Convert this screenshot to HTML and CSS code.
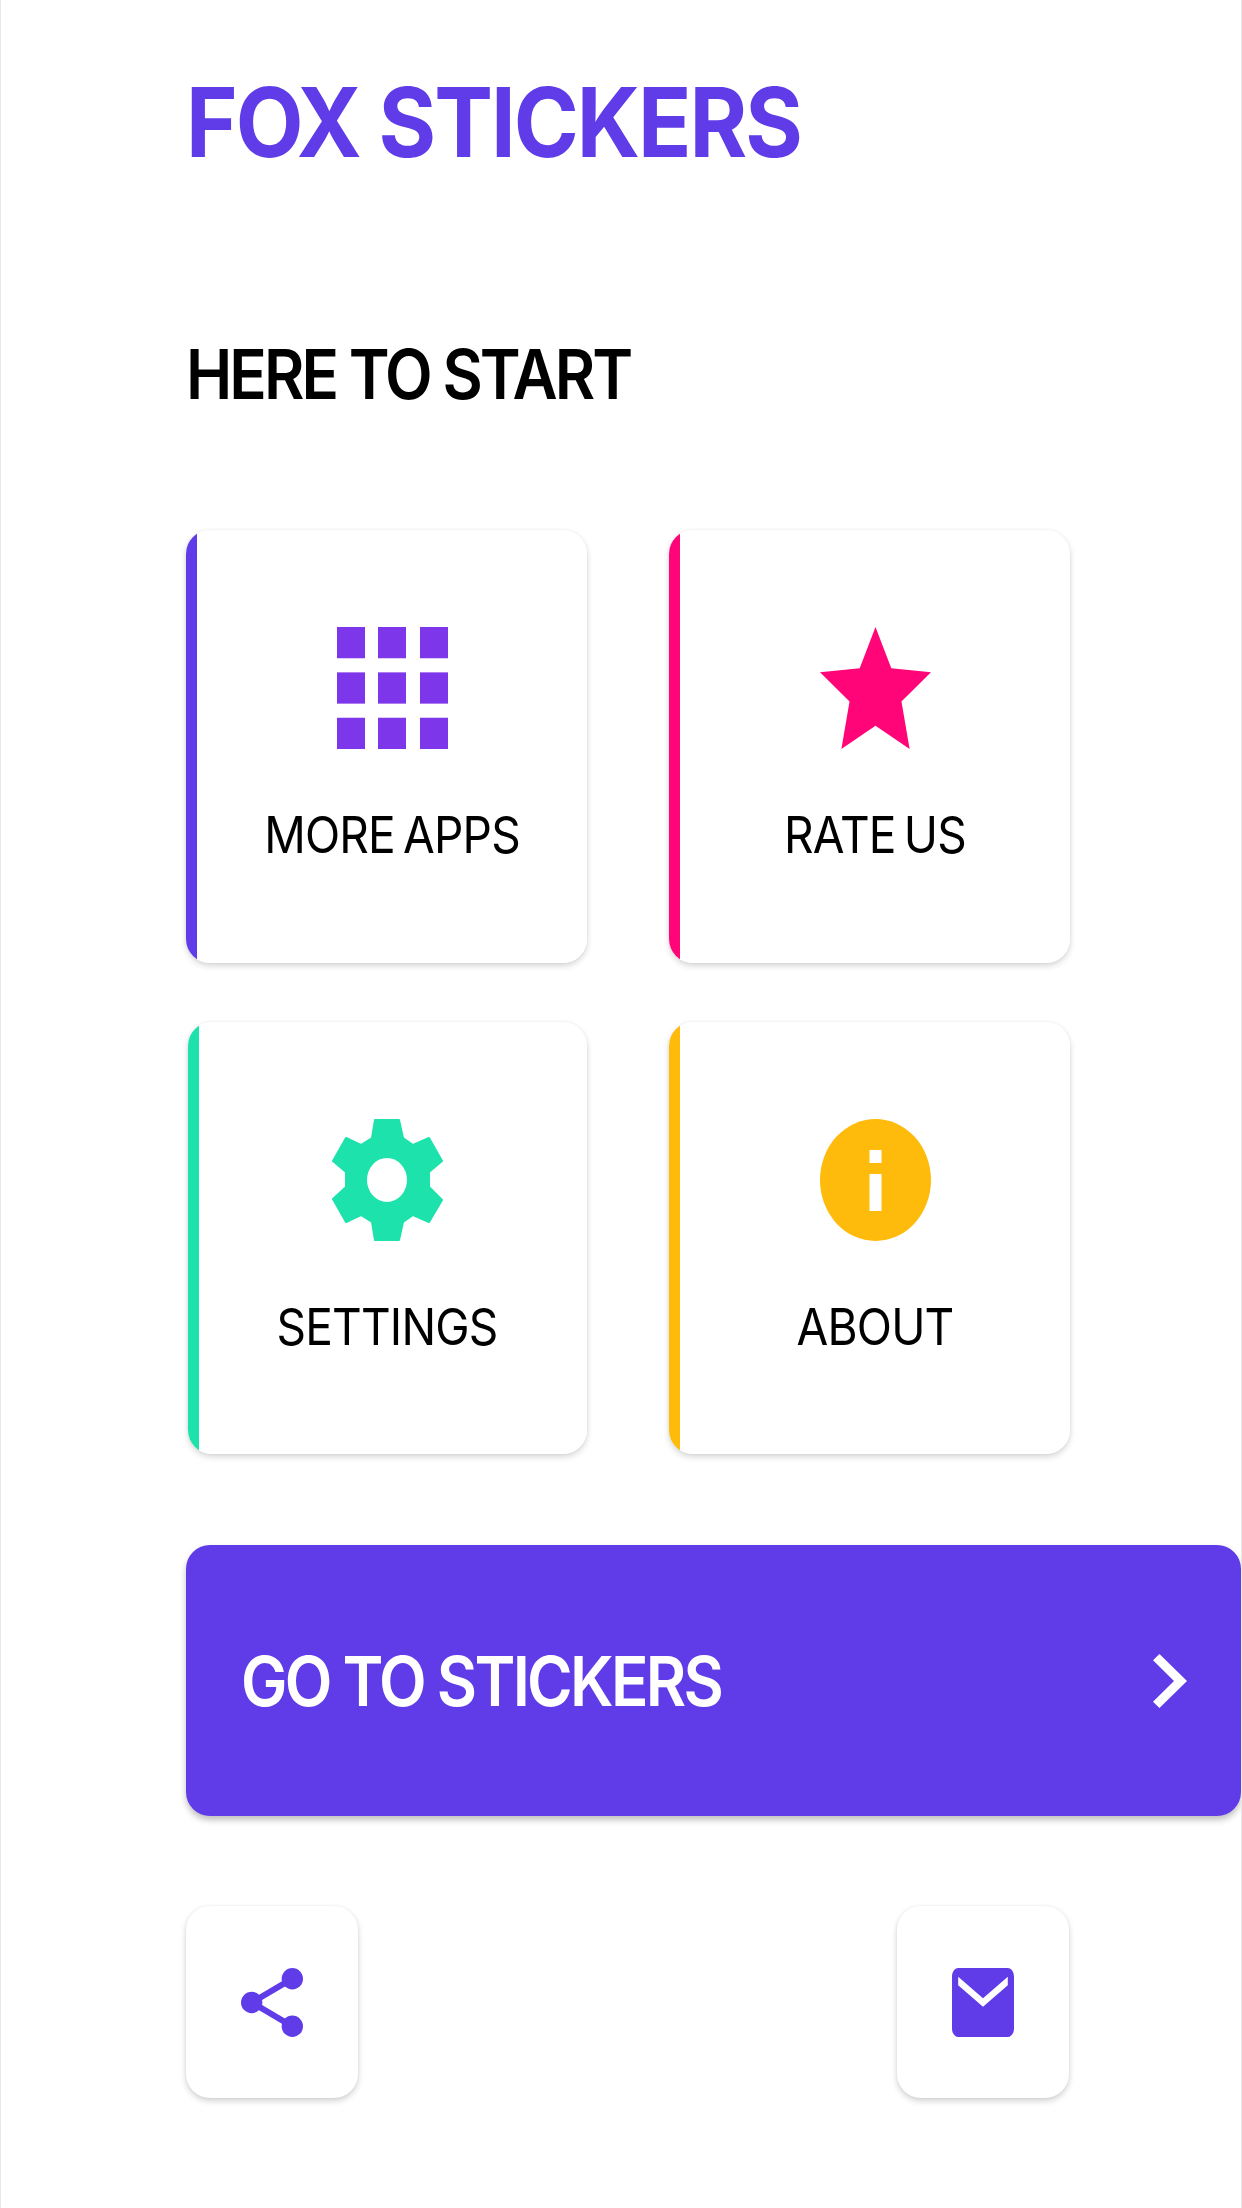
FILE: index.html
```html
<!DOCTYPE html>
<html lang="en">
<head>
    <meta charset="UTF-8">
    <meta name="viewport" content="width=device-width, initial-scale=1.0">
    <title>Fox Stickers</title>
    <link rel="stylesheet" href="styles.css">
</head>
<body>
    <main class="page">
        <h1 class="title">FOX STICKERS</h1>
        <h2 class="subtitle">HERE TO START</h2>

        <section class="menu">
            <a class="card card-apps">
                <svg class="card-icon" viewBox="0 0 111 121" preserveAspectRatio="none">
                    <g fill="#7e36ea">
                        <rect x="0" y="0" width="28" height="31"/>
                        <rect x="41" y="0" width="28" height="31"/>
                        <rect x="83" y="0" width="28" height="31"/>
                        <rect x="0" y="45" width="28" height="31"/>
                        <rect x="41" y="45" width="28" height="31"/>
                        <rect x="83" y="45" width="28" height="31"/>
                        <rect x="0" y="90" width="28" height="31"/>
                        <rect x="41" y="90" width="28" height="31"/>
                        <rect x="83" y="90" width="28" height="31"/>
                    </g>
                </svg>
                <span class="card-label">MORE APPS</span>
            </a>
            <a class="card card-rate">
                <svg class="card-icon" viewBox="0 0 109 121" preserveAspectRatio="none">
                    <polygon fill="#ff0578" points="54.5,0 70,41 109,45 80,74 88,121 54.5,98 21,121 29,74 0,45 39,41"/>
                </svg>
                <span class="card-label">RATE US</span>
            </a>
            <a class="card card-settings">
                <svg class="card-icon" viewBox="0 0 111 122" preserveAspectRatio="none">
                    <path fill="#1de2ab" stroke="#1de2ab" stroke-width="2" stroke-linejoin="round" fill-rule="evenodd" d="M43 1H67L71 19L81 26L97 19L110 42L97 53V68L110 81L97 103L81 96L71 103L67 121H43L40 103L29 96L14 103L1 80L14 68V53L1 42L14 19L29 26L40 19ZM55 38A21 23 0 1 0 55 84A21 23 0 1 0 55 38Z"/>
                </svg>
                <span class="card-label">SETTINGS</span>
            </a>
            <a class="card card-about">
                <svg class="card-icon" viewBox="0 0 111 122" preserveAspectRatio="none">
                    <ellipse cx="55.5" cy="61" rx="55.5" ry="61" fill="#ffbb0c"/>
                    <rect x="49.5" y="31" width="12" height="13" fill="#fff"/>
                    <rect x="49.5" y="55" width="12" height="37" fill="#fff"/>
                </svg>
                <span class="card-label">ABOUT</span>
            </a>
        </section>

        <a class="go-button">
            <span class="go-label">GO TO STICKERS</span>
            <svg class="go-arrow" viewBox="8.59 6 7.41 12" preserveAspectRatio="none">
                <path fill="#fff" d="M10 6L8.59 7.41 13.17 12l-4.58 4.59L10 18l6-6z"/>
            </svg>
        </a>

        <footer class="actions">
            <a class="action">
                <svg class="action-icon" viewBox="0 0 61 69" preserveAspectRatio="none">
                    <g fill="#5f3ce8" stroke="#5f3ce8">
                        <line x1="10.5" y1="34.5" x2="50.5" y2="10.7" stroke-width="6"/>
                        <line x1="10.5" y1="34.5" x2="50.5" y2="58.3" stroke-width="6"/>
                        <ellipse cx="50.5" cy="10.7" rx="10.5" ry="10.7" stroke="none"/>
                        <ellipse cx="10.5" cy="34.5" rx="10.5" ry="10.7" stroke="none"/>
                        <ellipse cx="50.5" cy="58.3" rx="10.5" ry="10.7" stroke="none"/>
                    </g>
                </svg>
            </a>
            <a class="action">
                <svg class="action-icon" viewBox="2 4 20 16" preserveAspectRatio="none">
                    <path fill="#5f3ce8" d="M20 4H4c-1.1 0-1.99.9-1.99 2L2 18c0 1.1.9 2 2 2h16c1.1 0 2-.9 2-2V6c0-1.1-.9-2-2-2zm0 4l-8 5-8-5V6l8 5 8-5v2z"/>
                </svg>
            </a>
        </footer>
    </main>
</body>
</html>
```

FILE: styles.css
```css
html, body {
    margin: 0;
    padding: 0;
    background-color: #fff;
}
body {
    font-family: Inter, "Liberation Sans", sans-serif;
    color: #000;
}
.page {
    box-sizing: border-box;
    width: 1242px;
    height: 2208px;
    padding: 72px 0 0 185px;
    border-left: 1px solid #e8e8e8;
    border-right: 1px solid #e8e8e8;
    overflow: hidden;
}
.title {
    margin: 0;
    font-size: 88px;
    line-height: 100px;
    font-weight: 700;
    color: #5f3ce8;
    letter-spacing: -2px;
    transform: scaleY(1.1);
    transform-origin: left center;
}
.subtitle {
    margin: 163px 0 0 0;
    font-size: 62px;
    line-height: 80px;
    font-weight: 600;
    letter-spacing: -2.9px;
    transform: scaleY(1.1);
    transform-origin: left center;
}
.menu {
    display: grid;
    grid-template-columns: 401px 401px;
    grid-template-rows: 433px 432px;
    column-gap: 82px;
    row-gap: 59px;
    margin-top: 115px;
}
.card {
    --accent: #5f3ce8;
    display: flex;
    flex-direction: column;
    align-items: center;
    box-sizing: border-box;
    padding: 97px 0 0 11px;
    border-radius: 24px;
    background: linear-gradient(to right, var(--accent) 11px, #fff 11px);
    box-shadow: 0 3px 6px rgba(0, 0, 0, 0.16), 0 0 3px rgba(0, 0, 0, 0.06);
}
.card-rate {
    --accent: #ff0578;
}
.card-settings {
    --accent: #1de2ab;
    margin-left: 2px;
    padding-right: 12px;
}
.card-about {
    --accent: #ffbb0c;
}
.card-icon {
    width: 111px;
    height: 122px;
}
.card-label {
    margin-top: 55px;
    font-size: 46px;
    line-height: 60px;
    letter-spacing: -0.8px;
    word-spacing: -4px;
    transform: scaleY(1.1);
}
.go-button {
    display: flex;
    align-items: center;
    justify-content: space-between;
    box-sizing: border-box;
    width: 1055px;
    height: 271px;
    margin-top: 91px;
    padding: 0 54px 0 55px;
    border-radius: 24px;
    background-color: #5f3ce8;
    box-shadow: 0 4px 6px rgba(0, 0, 0, 0.25);
    color: #fff;
}
.go-label {
    margin-top: 2px;
    font-size: 62px;
    line-height: 80px;
    font-weight: 600;
    letter-spacing: -2.7px;
    transform: scaleY(1.1);
}
.go-arrow {
    width: 34px;
    height: 54px;
}
.actions {
    display: flex;
    justify-content: space-between;
    width: 883px;
    margin-top: 90px;
}
.action {
    display: flex;
    align-items: center;
    justify-content: center;
    box-sizing: border-box;
    width: 172px;
    height: 192px;
    border-radius: 24px;
    background-color: #fff;
    box-shadow: 0 3px 6px rgba(0, 0, 0, 0.18), 0 0 3px rgba(0, 0, 0, 0.05);
}
.action-icon {
    width: 62px;
    height: 69px;
}
```
